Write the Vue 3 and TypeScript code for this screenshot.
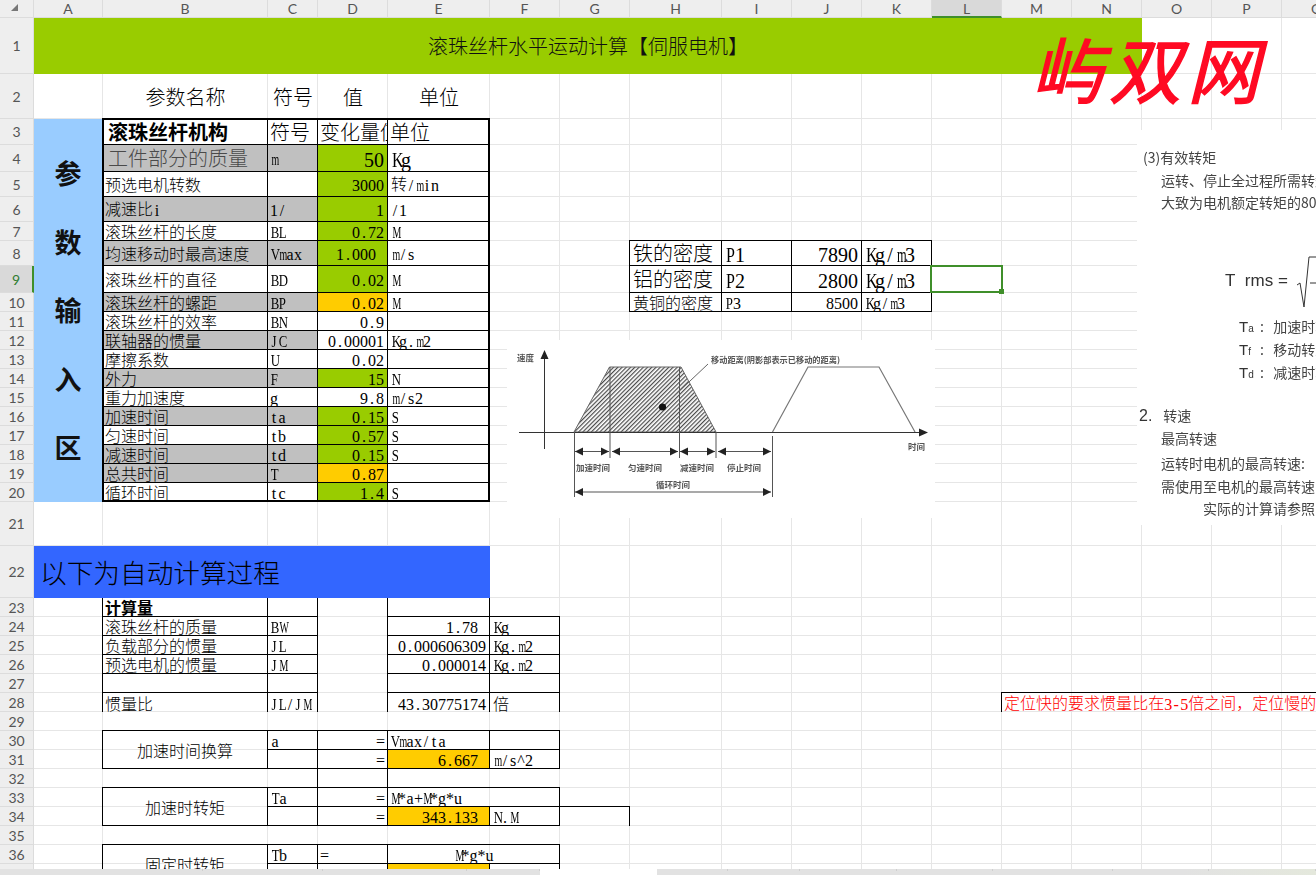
<script setup lang="ts">
type Cell = { area: string; t: string; cl: string };

const colW = [69, 165, 50, 70, 102, 70, 70, 92, 70, 70, 70, 70, 70, 70, 70, 70, 70];
const rowH = [56, 45, 26, 27, 25, 25, 19, 25, 27, 19, 19, 19, 19, 19, 19, 19, 19, 19, 19, 19, 44, 52, 19, 19, 19, 19, 19, 19, 19, 19, 19, 19, 19, 19, 19, 19, 19];
const letters = 'ABCDEFGHIJKLMNOPQ'.split('');

const gridStyle = {
  gridTemplateColumns: `34px ${colW.map((w) => w + 'px').join(' ')}`,
  gridTemplateRows: `18px ${rowH.map((h) => h + 'px').join(' ')}`,
};

function parse(a: string): [number, number] {
  return [a.charCodeAt(0) - 64, parseInt(a.slice(1), 10)];
}
function area(ref: string): string {
  const [a, b] = ref.split(':');
  const [c1, r1] = parse(a);
  const [c2, r2] = parse(b || a);
  return `${r1 + 1} / ${c1 + 1} / ${r2 + 2} / ${c2 + 2}`;
}
// Latin runs are set half-width, one em-half per character, as the sheet's font does.
function segs(t: string) {
  return Array.from(t).map((s) => {
    const lat = s.charCodeAt(0) < 128;
    let cl = '';
    if (lat) cl = /[mMWw]/.test(s) ? 'ch wide' : /[A-Z]/.test(s) ? 'ch cap' : 'ch';
    return { s, cl };
  });
}

const cells: Cell[] = [];
const add = (ref: string, t: string, cl = '') => cells.push({ area: area(ref), t, cl });

add('A1:N1', '滚珠丝杆水平运动计算【伺服电机】', 'mid s20 lime title');
add('B2', '参数名称', 'mid s20');
add('C2', '符号', 'mid s20');
add('D2', '值', 'mid s20');
add('E2', '单位', 'mid s20');
add('A22:E22', '以下为自动计算过程', 's27 cobalt banner');

// input block
add('B3', '滚珠丝杆机构', 's20 br bb bold pad5');
add('C3', '符号', 's20 br bb');
add('D3', '变化量值', 's20 br bb');
add('E3', '单位', 's20 bb');

const inputs: [number, string, string, string, string, string][] = [
  [4, '工件部分的质量', 'm', '50', 'Kg', 'grey big'],
  [5, '预选电机转数', '', '3000', '转/min', ''],
  [6, '减速比i', '1/', '1', '/1', 'grey'],
  [7, '滚珠丝杆的长度', 'BL', '0.72', 'M', ''],
  [8, '均速移动时最高速度', 'Vmax', '1.000', 'm/s', 'grey fmt'],
  [9, '滚珠丝杆的直径', 'BD', '0.02', 'M', ''],
  [10, '滚珠丝杆的螺距', 'BP', '0.02', 'M', 'grey amber'],
  [11, '滚珠丝杆的效率', 'BN', '0.9', '', 'plain'],
  [12, '联轴器的惯量', 'JC', '0.00001', 'Kg.m2', 'grey plain'],
  [13, '摩擦系数', 'U', '0.02', '', 'plain'],
  [14, '外力', 'F', '15', 'N', 'grey'],
  [15, '重力加速度', 'g', '9.8', 'm/s2', 'plain'],
  [16, '加速时间', 'ta', '0.15', 'S', 'grey'],
  [17, '匀速时间', 'tb', '0.57', 'S', ''],
  [18, '减速时间', 'td', '0.15', 'S', 'grey'],
  [19, '总共时间', 'T', '0.87', '', 'grey amber'],
  [20, '循环时间', 'tc', '1.4', 'S', ''],
];
for (const [r, name, sym, val, unit, f] of inputs) {
  const grey = f.includes('grey') ? ' silver' : '';
  const big = f.includes('big');
  add(`B${r}`, name, `s${big ? 20 : 16} br bb${grey}${big ? ' dim pad5' : ''}`);
  add(`C${r}`, sym, `s${big ? 18 : 16} br bb pad2${grey}`);
  const bg = f.includes('amber') ? ' amber' : f.includes('plain') ? '' : ' lime';
  add(`D${r}`, val, `s${big ? 20 : 16} br bb right${bg}${f.includes('fmt') ? ' fmt' : ''}`);
  add(`E${r}`, unit, `s${big ? 20 : 16} bb pad3`);
}
add('A3:A20', '', 'side');

// density table
const dens: [number, string, string, string][] = [
  [8, '铁的密度', 'P1', '7890'],
  [9, '铝的密度', 'P2', '2800'],
  [10, '黄铜的密度', 'P3', '8500'],
];
for (const [r, n, p, v] of dens) {
  const s = r === 10 ? 's16' : 's20';
  const t = r === 8 ? ' bt' : '';
  add(`H${r}`, n, `${s} bl br bb pad3${t}`);
  add(`I${r}`, p, `${s} br bb pad3${t}`);
  add(`J${r}`, v, `${s} br bb right${t}`);
  add(`K${r}`, 'Kg/m3', `${s} br bb pad3${t}`);
}

// calculated quantities
add('B23', '计算量', 's16 bold bl br bb');
add('C23', '', 'br bb');
add('D23', '', 'br');
add('E23', '', 'br bb');
const calc: [number, string, string, string, string][] = [
  [24, '滚珠丝杆的质量', 'BW', '1.78', 'Kg'],
  [25, '负载部分的惯量', 'JL', '0.000606309', 'Kg.m2'],
  [26, '预选电机的惯量', 'JM', '0.000014', 'Kg.m2'],
  [27, '', '', '', ''],
  [28, '惯量比', 'JL/JM', '43.30775174', '倍'],
];
for (const [r, n, s, v, u] of calc) {
  const b = r === 28 ? '' : ' bb';
  add(`B${r}`, n, `s16 bl br${b}`);
  add(`C${r}`, s, `s16 br pad2${b}`);
  add(`D${r}`, '', 'br');
  add(`E${r}`, v, `s16 br right${b}${r === 24 ? ' fmt' : ''}`);
  add(`F${r}`, u, `s16 br pad3${b}${r === 24 ? ' bt' : ''}`);
}
add('M28:Q28', '定位快的要求惯量比在3-5倍之间\uFF0C定位慢的要求惯量比在5-10倍之间', 's16 bt bl red pad2');

// acceleration
add('B30:B31', '加速时间换算', 's16 mid bt bl br bb');
add('C30', 'a', 's16 bt br bb pad3');
add('D30', '=', 's16 bt br bb right');
add('E30', 'Vmax/ta', 's16 bt br bb pad2');
add('F30', '', 'bt br bb');
add('C31', '', 'br bb');
add('D31', '=', 's16 br bb right');
add('E31', '6.667', 's16 br bb right fmt amber');
add('F31', 'm/s^2', 's16 br bb pad3');
add('C32', '', 'br');
add('D32', '', 'br');

add('B33:B34', '加速时转矩', 's16 mid bt bl br bb');
add('C33', 'Ta', 's16 bt br bb pad3');
add('D33', '=', 's16 bt br bb right');
add('E33:F33', 'M*a+M*g*u', 's16 bt br bb pad2');
add('C34', '', 'br bb');
add('D34', '=', 's16 br bb right');
add('E34', '343.133', 's16 br bb right fmt amber');
add('F34', 'N.M', 's16 br bb pad3');
add('G34', '', 'bt br');

add('B36:B37', '固定时转矩', 's16 mid bt bl br bb');
add('C36', 'Tb', 's16 bt br bb pad3');
add('D36', '=', 's16 bt br bb pad2');
add('E36:F36', 'M*g*u', 's16 mid bt br bb');
add('C37', '', 'br bb');
add('D37', '', 'br bb');
add('E37', '', 'br bb amber');
add('F37', '', 'br bb');

const thick = area('B3:E20');
const selected = area('L9');
const sideChars = ['参', '数', '输', '入', '区'];

const leftTicks = [203, 120, 144, 73];
const rightTicks = [71, 72, 97, 96, 120, 96, 107];

const phases = [
  { t: '加速时间', x: 593 },
  { t: '匀速时间', x: 645 },
  { t: '减速时间', x: 697 },
  { t: '停止时间', x: 744 },
];
const arrows: [number, number, number][] = [
  [575, 609, 451.5],
  [612, 678, 451.5],
  [680, 715, 451.5],
  [718, 771, 451.5],
  [575, 771, 492],
];

type PicRow = { t?: string; x: number; gap: number; kind?: string; sub?: string };
const picRows: PicRow[] = [
  { t: '(3)有效转矩', x: 6, gap: 17 },
  { t: '运转、停止全过程所需转矩', x: 24, gap: 3 },
  { t: '大致为电机额定转矩的80%', x: 24, gap: 2 },
  { kind: 'formula', x: 88, gap: 42 },
  { kind: 'def', t: '加速时转矩', sub: 'a', x: 102, gap: 8 },
  { kind: 'def', t: '移动转矩', sub: 'f', x: 102, gap: 3 },
  { kind: 'def', t: '减速时转矩', sub: 'd', x: 102, gap: 3 },
  { kind: 'num', t: '转速', x: 2, gap: 23 },
  { t: '最高转速', x: 24, gap: 3 },
  { t: '运转时电机的最高转速:', x: 24, gap: 5 },
  { t: '需使用至电机的最高转速', x: 24, gap: 3 },
  { t: '实际的计算请参照', x: 66, gap: 2 },
];
</script>

<template>
  <div class="app">
    <div class="viewport">
      <div class="sheet" :style="gridStyle">
        <div class="corner"><i></i></div>
        <div
          v-for="(l, i) in letters"
          :key="l"
          class="col-head"
          :class="{ active: l === 'L' }"
          :style="{ gridArea: `1 / ${i + 2} / 2 / ${i + 3}` }"
        >{{ l }}</div>
        <div
          v-for="(h, r) in rowH"
          :key="'r' + r"
          class="row-head"
          :class="{ active: r === 8 }"
          :style="{ gridArea: `${r + 2} / 1 / ${r + 3} / 2` }"
        >{{ r + 1 }}</div>
        <template v-for="(h, r) in rowH" :key="'g' + r">
          <div
            v-for="(l, c) in letters"
            :key="l"
            class="blank"
            :style="{ gridArea: `${r + 2} / ${c + 2} / ${r + 3} / ${c + 3}` }"
          ></div>
        </template>

        <div v-for="(c, i) in cells" :key="i" class="cell" :class="c.cl" :style="{ gridArea: c.area }">
          <span v-if="c.t" class="tx"><span v-for="(g, j) in segs(c.t)" :key="j" :class="g.cl">{{ g.s }}</span></span>
          <template v-if="c.cl === 'side'">
            <b v-for="ch in sideChars" :key="ch" class="side-ch">{{ ch }}</b>
          </template>
        </div>

        <div class="thick" :style="{ gridArea: thick }"></div>
        <div class="sel" :style="{ gridArea: selected }"><i></i></div>
      </div>

      <svg class="diagram" viewBox="507 340 428 178" width="428" height="178">
        <defs>
          <pattern id="hatch" width="3" height="3" patternUnits="userSpaceOnUse" patternTransform="rotate(45)">
            <rect width="3" height="3" fill="#fff" />
            <rect width="1.2" height="3" fill="#4a4a4a" />
          </pattern>
        </defs>
        <polygon points="574,432 609.5,367 681,367 716,432" fill="url(#hatch)" stroke="#666" />
        <polyline points="772.5,432 808,367 879,367 915,432" fill="none" stroke="#777" stroke-width="1.2" />
        <path d="M544.5 356V449M519 432.5H920" stroke="#333" stroke-width="1" fill="none" />
        <path d="M544.5 350l-4 9h8zM928 432.5l-9 -4v8z" fill="#222" />
        <path d="M610 367V458M679.5 367V458M574.5 432V497M716 432V458M772.5 436V497" stroke="#555" stroke-width="1" fill="none" />
        <path d="M662.5 407L708 364" stroke="#666" stroke-width="1" fill="none" />
        <circle cx="662.5" cy="407" r="3.6" fill="#111" />
        <g v-for="(a, i) in arrows" :key="i">
          <path :d="`M${a[0]} ${a[2]}H${a[1]}`" stroke="#555" stroke-width="1.2" />
          <path :d="`M${a[0]} ${a[2]}l8 -4v8zM${a[1]} ${a[2]}l-8 -4v8z`" fill="#222" />
        </g>
        <g class="dg-text">
          <text x="517" y="361" font-size="8.5">速度</text>
          <text x="711" y="363" font-size="8.2">移动距离(阴影部表示已移动的距离)</text>
          <text x="908" y="450" font-size="8.5">时间</text>
          <text v-for="p in phases" :key="p.t" :x="p.x" y="471" text-anchor="middle" font-size="8.5">{{ p.t }}</text>
          <text x="673" y="488" text-anchor="middle" font-size="8.5">循环时间</text>
        </g>
      </svg>

      <div class="manual">
        <template v-for="(p, i) in picRows" :key="i">
          <div v-if="p.kind === 'formula'" class="formula" :style="{ marginTop: p.gap + 'px', marginLeft: p.x + 'px' }">
            <span class="f-text">T&nbsp;&nbsp;rms =</span>
            <svg class="radical" width="22" height="54" viewBox="0 0 22 54">
              <path d="M3 31l3 -2l4 24l5 -50h7" fill="none" stroke="#333" stroke-width="1" />
              <path d="M16 29h6" stroke="#333" stroke-width="1" />
            </svg>
          </div>
          <div v-else class="m-line" :style="{ marginTop: p.gap + 'px', marginLeft: p.x + 'px' }">
            <template v-if="p.kind === 'def'">
              <span class="def-t">T<small>{{ p.sub }}</small></span><span class="def-c">:</span>
            </template>
            <span v-if="p.kind === 'num'" class="num">2.</span>
            {{ p.t }}
          </div>
        </template>
      </div>

      <div class="stamp">屿双网</div>
    </div>

    <div class="hbar">
      <div class="hbar-left">
        <span v-for="(w, i) in leftTicks" :key="i" :style="{ width: w + 'px' }"></span>
      </div>
      <div class="hbar-right">
        <span v-for="(w, i) in rightTicks" :key="i" :style="{ width: w + 'px' }"></span>
      </div>
    </div>
  </div>
</template>

<style>
html, body { margin: 0; background: #fff; }
</style>

<style scoped>
.app {
  width: 1316px;
  height: 875px;
  display: flex;
  flex-direction: column;
  overflow: hidden;
  background: #fff;
  font-family: "Noto Sans CJK SC", "Liberation Serif", sans-serif;
  color: #000;
}
.viewport { position: relative; flex: 1; min-height: 0; overflow: hidden; }
.sheet { display: grid; width: 1316px; }

.corner, .col-head, .row-head {
  background: #eeeeee;
  color: #555;
  font-family: Lato, "Open Sans", sans-serif;
  font-size: 14px;
  display: flex;
  align-items: center;
  justify-content: center;
  box-sizing: border-box;
  border-right: 1px solid #dcdcdc;
  border-bottom: 1px solid #dcdcdc;
}
.corner { grid-area: 1 / 1 / 2 / 2; position: relative; }
.corner i {
  position: absolute;
  left: 11px;
  top: 4px;
  width: 0;
  height: 0;
  border-left: 7px solid transparent;
  border-bottom: 7px solid #777;
}
.col-head.active { background: #d9d9d9; border-bottom: 2px solid #3f8f2a; }
.row-head.active { background: #d9d9d9; border-right: 2px solid #3f8f2a; color: #2e7d32; }

.blank { box-sizing: border-box; border-right: 1px solid #e6e6e6; border-bottom: 1px solid #e6e6e6; }

.cell {
  box-sizing: border-box;
  display: flex;
  align-items: center;
  justify-content: flex-start;
  overflow: hidden;
  padding: 0 0 0 2px;
  min-width: 0;
  line-height: 1;
  white-space: nowrap;
  font-weight: 300;
}
.tx { white-space: pre; }
.ch {
  display: inline-block;
  width: 0.5em;
  text-align: center;
  font-family: "Liberation Serif", serif;
  position: relative;
  top: 1px;
}
.ch.wide { transform: scaleX(0.62); }
.ch.cap { transform: scaleX(0.8); }

.s16 { font-size: 16px; }
.s20 { font-size: 20px; }
.s27 { font-size: 26.67px; }
.bold { font-weight: 700; }
.dim { color: #4a4a4a; }
.red { color: #ff0000; }
.mid { justify-content: center; padding: 0; }
.right { justify-content: flex-end; padding: 0 3px 0 0; }
.fmt { padding-right: 11px; }
.pad2 { padding-left: 2px; }
.pad3 { padding-left: 3px; }
.pad5 { padding-left: 5px; }

.lime { background: #99cc00; }
.amber { background: #ffcc00; }
.silver { background: #c0c0c0; }
.cobalt { background: #3366ff; }
.title { color: #111; }
.banner { padding-left: 6px; }

.br { border-right: 1px solid #000; }
.bb { border-bottom: 1px solid #000; }
.bt { border-top: 1px solid #000; margin-top: -1px; }
.bl { border-left: 1px solid #000; margin-left: -1px; }

.side {
  background: #99ccff;
  flex-direction: column;
  align-items: center;
  justify-content: center;
  padding: 0;
  margin-right: 1px;
}
.side-ch {
  font-size: 27px;
  line-height: 68.5px;
  font-weight: 700;
  color: #111;
}
.thick {
  box-sizing: border-box;
  border: 2px solid #000;
  margin: -1px 0 0 -1px;
  pointer-events: none;
}
.sel {
  position: relative;
  box-sizing: border-box;
  border: 2px solid #3f8f2a;
  margin: -1px -1px 0 -2px;
}
.sel i {
  position: absolute;
  right: -3px;
  bottom: -3px;
  width: 5px;
  height: 5px;
  background: #3f8f2a;
}

.diagram {
  position: absolute;
  left: 507px;
  top: 340px;
  background: #fff;
  filter: blur(0.35px);
}
.dg-text { fill: #555; font-family: "Noto Sans CJK SC", sans-serif; font-weight: 700; }

.manual {
  position: absolute;
  left: 1137px;
  top: 130px;
  width: 179px;
  height: 395px;
  background: #fff;
  overflow: hidden;
  color: #444;
  font-size: 14px;
  filter: blur(0.3px);
}
.m-line { height: 20px; line-height: 20px; white-space: nowrap; }
.def-t {
  display: inline-block;
  width: 21px;
  font-family: "Liberation Sans", sans-serif;
  font-size: 15px;
  color: #333;
}
.def-t small { font-size: 10px; }
.def-c { display: inline-block; width: 10px; }
.num {
  display: inline-block;
  width: 21px;
  font-family: "Liberation Sans", sans-serif;
  font-size: 16px;
  color: #333;
}
.formula { height: 54px; display: flex; align-items: center; }
.f-text {
  font-family: "Liberation Sans", sans-serif;
  font-size: 17px;
  color: #333;
  width: 72px;
  white-space: nowrap;
}
.radical { flex: none; }

.stamp {
  position: absolute;
  left: 1027px;
  top: 19px;
  font-family: "Noto Sans CJK SC", sans-serif;
  font-weight: 400;
  -webkit-text-stroke: 1.5px #ff0a23;
  font-size: 72px;
  line-height: 96px;
  letter-spacing: 6px;
  color: #ff0a23;
  transform: skewX(-14deg);
  transform-origin: left bottom;
  white-space: nowrap;
}

.hbar { height: 6px; flex: none; display: flex; background: #fff; }
.hbar-left, .hbar-right { display: flex; height: 6px; background: #e2e2e2; overflow: hidden; }
.hbar-left { width: 540px; }
.hbar-right { margin-left: 117px; flex: 1; background: linear-gradient(90deg, #e2e2e2 80%, #e4e8dc); }
.hbar span { flex: none; height: 2px; box-sizing: border-box; border-right: 1px solid #cfcfcf; }
</style>
